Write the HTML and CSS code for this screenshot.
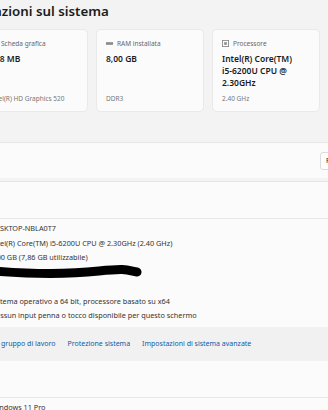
FILE: index.html
```html
<!DOCTYPE html>
<html lang="it">
  <head>
    <meta charset="UTF-8" />
    <title>Informazioni sul sistema</title>
    <link rel="stylesheet" href="styles.css">
  </head>
  <body>
    <div class="page">
      <h1 class="title">Informazioni sul sistema</h1>

      <div class="cards">
        <div class="card">
          <div class="card-label">
            <svg class="ico" viewBox="0 0 8 8"><rect x="0.5" y="1.5" width="7" height="5" fill="none" stroke="#8a8a8a"/></svg>
            Scheda grafica
          </div>
          <div class="card-value">128 MB</div>
          <div class="card-sub">Intel(R) HD Graphics 520</div>
        </div>
        <div class="card">
          <div class="card-label">
            <svg class="ico" viewBox="0 0 8 8"><rect x="0" y="2.5" width="8" height="3" fill="#8a8a8a"/></svg>
            RAM installata
          </div>
          <div class="card-value">8,00 GB</div>
          <div class="card-sub">DDR3</div>
        </div>
        <div class="card">
          <div class="card-label">
            <svg class="ico" viewBox="0 0 8 8"><rect x="0.5" y="0.5" width="7" height="7" fill="none" stroke="#8a8a8a"/><rect x="2.5" y="2.5" width="3" height="3" fill="#8a8a8a"/></svg>
            Processore
          </div>
          <div class="card-value">Intel(R) Core(TM) <span class="nowrap">i5-6200U</span> CPU @ 2.30GHz</div>
          <div class="card-sub">2.40 GHz</div>
        </div>
      </div>

      <section class="panel rename">
        <span class="panel-head">DESKTOP-NBLA0T7</span>
        <button class="btn">Rinomina questo PC</button>
      </section>

      <section class="panel">
        <div class="panel-head row-head">Specifiche dispositivo</div>
        <div class="rows">
          <div class="row"><span class="key">Nome dispositivo</span><span class="val">DESKTOP-NBLA0T7</span></div>
          <div class="row"><span class="key">Processore</span><span class="val">Intel(R) Core(TM) i5-6200U CPU @ 2.30GHz (2.40 GHz)</span></div>
          <div class="row"><span class="key">RAM installata</span><span class="val">8,00 GB (7,86 GB utilizzabile)</span></div>
          <div class="row"><span class="key">ID dispositivo</span><span class="val">
            <svg class="scribble" width="160" height="16" viewBox="0 0 160 16"><path d="M 4 7 C 40 10, 80 10, 108 7 S 136 6, 146 8" fill="none" stroke="#000" stroke-width="9" stroke-linecap="round"/></svg>
          </span></div>
          <div class="row"><span class="key">ID prodotto</span><span class="val"></span></div>
          <div class="row"><span class="key">Tipo sistema</span><span class="val">Sistema operativo a 64 bit, processore basato su x64</span></div>
          <div class="row"><span class="key">Penna e tocco</span><span class="val">Nessun input penna o tocco disponibile per questo schermo</span></div>
        </div>
        <div class="links">
          <span class="links-label">Link correlati</span>
          <a href="#">Dominio o gruppo di lavoro</a>
          <a href="#">Protezione sistema</a>
          <a href="#">Impostazioni di sistema avanzate</a>
        </div>
        <div class="panel-head row-head">Specifiche Windows</div>
        <div class="rows">
          <div class="row"><span class="key">Edizione</span><span class="val">Windows 11 Pro</span></div>
        </div>
      </section>
    </div>
  </body>
</html>
```

FILE: styles.css
```css
html, body {
  margin: 0;
  background: #f3f3f3;
  overflow: hidden;
}
body {
  font-family: "Noto Sans", "Open Sans", sans-serif;
  color: #1b1b1b;
}
.page {
  width: 600px;
  margin-left: -140px;
}
.title {
  margin: 0;
  padding-left: 89px;
  font-size: 13.3px;
  font-weight: 600;
  line-height: 22px;
  white-space: nowrap;
}
.cards {
  display: flex;
  gap: 8px;
  margin: 7px 0 0 120px;
}
.card {
  width: 88px;
  height: 65px;
  padding: 8px 9px;
  background: #fbfbfb;
  border: 1px solid #e9e9e9;
  border-radius: 5px;
  display: flex;
  flex-direction: column;
}
.card-label {
  display: flex;
  align-items: center;
  gap: 4px;
  font-size: 6.5px;
  color: #666;
  height: 10px;
}
.ico {
  width: 7px;
  height: 7px;
}
.card-value {
  margin-top: 5px;
  font-size: 8.5px;
  font-weight: 600;
  line-height: 12px;
  flex: 1;
}
.nowrap {
  white-space: nowrap;
}
.card-sub {
  font-size: 6.5px;
  color: #777;
}
.panel {
  background: #fbfbfb;
  border-top: 1px solid #e6e6e6;
}
.rename {
  margin-top: 30px;
  margin-bottom: 3px;
  height: 35px;
  display: flex;
  align-items: center;
  gap: 20px;
  padding-left: 20px;
}
.panel-head {
  font-size: 8px;
}
.rename .panel-head {
  flex: 0 0 420px;
}
.btn {
  height: 18px;
  padding: 0 5px;
  background: #fefefe;
  border: 1px solid #dcdcdc;
  border-radius: 3px;
  font-family: inherit;
  font-size: 7px;
  color: #1b1b1b;
  white-space: nowrap;
}
.row-head {
  height: 36px;
  line-height: 36px;
  padding-left: 20px;
  border-bottom: 1px solid #e6e6e6;
}
.rows {
  padding: 2px 0 4px;
}
.row {
  display: flex;
  height: 14.5px;
  align-items: center;
  font-size: 7.3px;
  color: #333;
  white-space: nowrap;
}
.key {
  width: 110.5px;
  padding-left: 20px;
}
.scribble {
  display: block;
}
.links {
  display: flex;
  gap: 12px;
  align-items: center;
  height: 34px;
  background: #f1f1f1;
  padding-left: 20px;
  font-size: 7px;
}
.links-label {
  width: 73px;
}
.links a {
  color: #0f5ca8;
  text-decoration: none;
}
```
